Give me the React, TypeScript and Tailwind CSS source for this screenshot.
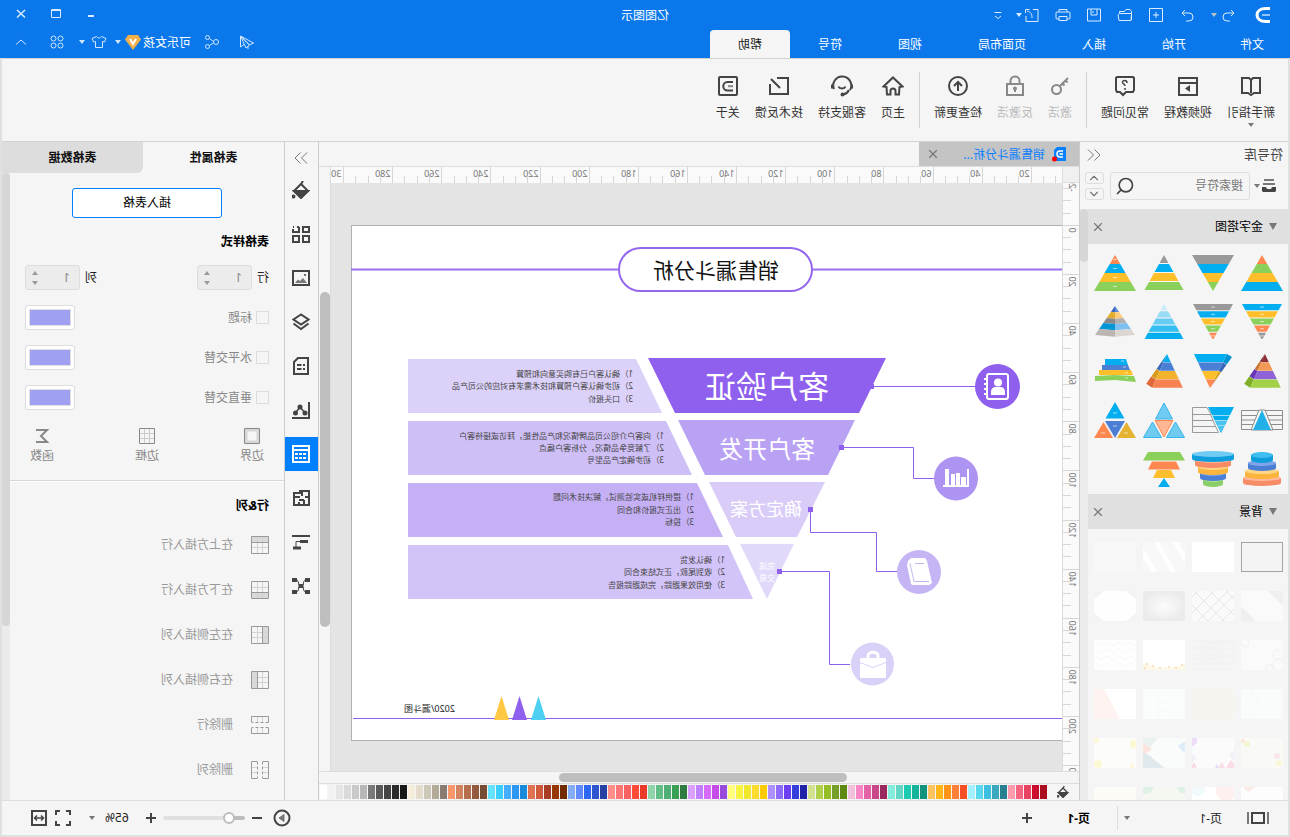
import type { ReactNode } from "react";
import { ChevronDown, ChevronUp, Search, X } from "lucide-react";

const BLUE = "#02aeef";
const NAVY = "#4b7fd6";
const YELLOW = "#ffbf2b";
const GREEN = "#8bd05a";
const ORANGE = "#ff8850";
const GRAY = "#999999";

type IconProps = {
  size?: number;
  box?: number;
  width?: number;
  children: ReactNode;
};

function Icon({ size = 16, box = 16, width = 1, children }: IconProps) {
  return (
    <svg
      width={size}
      height={size}
      viewBox={`0 0 ${box} ${box}`}
      fill="none"
      stroke="currentColor"
      strokeWidth={width}
      className="block shrink-0"
      aria-hidden="true"
    >
      {children}
    </svg>
  );
}

function Caret({ className = "" }: { className?: string }) {
  return (
    <svg width="6" height="4" viewBox="0 0 6 4" className={`block shrink-0 ${className}`} aria-hidden="true">
      <path d="M0 0h6L3 4z" fill="currentColor" />
    </svg>
  );
}

/* ---------- Header ---------- */

const quickActions = [
  { label: "重做", icon: <path d="M13 6H6a4 4 0 0 0 0 8h3M10 3l3 3-3 3" /> },
  { label: "新建", icon: <path d="M1.500 1.500h13v13h-13zM8 5v6M5 8h6" /> },
  { label: "打开", icon: <path d="M1.500 13V4.500L3 2.500h4l1.500 2h5V6M1.500 6.500h12L15 8l-1 5.500H2z" /> },
  { label: "保存", icon: <path d="M1.500 2h13v12h-13zM5 2v6h6V2M9 4v2" /> },
  { label: "打印", icon: <path d="M4 5V2.500h8V5M4 12H1.500l-.5-1V6l.5-1h13l.5 1v5l-.5 1H12M4 9.500h8v4H4z" /> },
  { label: "导出", icon: <path d="M7 2.500H2v12h12V9M14.500 2.500h-4M14.500 2.500V6M8 11c0-4 1-6 5-7" /> },
];

function TitleBar() {
  return (
    <div className="grid h-[30px] grid-cols-[1fr_auto_1fr] items-center">
      <div className="flex items-center pl-[19px]">
        <svg width="16" height="18" viewBox="0 0 16 18" fill="none" aria-hidden="true">
          <path d="M1 2.500h4c6 0 9 3 9 6.500s-3 6.500-9 6.500H1" stroke="#fff" strokeWidth="3" />
          <path d="M1 9h8" stroke="#8ec4fa" strokeWidth="2" />
        </svg>
        <button aria-label="撤销" className="ml-[18px]">
          <Icon>
            <path d="M3 6h7a4 4 0 0 1 0 8H7M6 3L3 6l3 3" />
          </Icon>
        </button>
        <Caret className="ml-1 mr-4 text-[#b9c6c9]" />
        <div className="flex gap-[15px]">
          {quickActions.map((a) => (
            <button key={a.label} aria-label={a.label}>
              <Icon>{a.icon}</Icon>
            </button>
          ))}
        </div>
        <Caret className="ml-0.5" />
        <button aria-label="更多" className="ml-2.5">
          <Icon>
            <path d="M4.500 5.500h7M5 9l3 2.500L11 9" />
          </Icon>
        </button>
      </div>
      <div className="pt-px text-xs text-white">亿图图示</div>
      <div className="flex justify-end pr-1">
        <button aria-label="最小化" className="flex w-[35px] justify-center">
          <Icon width={2}>
            <path d="M5 9h6" />
          </Icon>
        </button>
        <button aria-label="最大化" className="flex w-[35px] justify-center">
          <Icon>
            <path d="M3.500 2.500h9v8h-9zM3.500 3.500h9" />
          </Icon>
        </button>
        <button aria-label="关闭" className="flex w-[35px] justify-center">
          <Icon width={1.5}>
            <path d="M4 3l8 7.500M12 3l-8 7.500" />
          </Icon>
        </button>
      </div>
    </div>
  );
}

const menuTabs = ["开始", "插入", "页面布局", "视图", "符号"];

function MenuBar() {
  return (
    <div className="flex h-7 items-end justify-between">
      <nav className="flex h-7 text-xs text-white">
        <button className="w-[76px] pt-0.5">文件</button>
        {menuTabs.map((t) => (
          <button key={t} className="px-7 pt-0.5">
            {t}
          </button>
        ))}
        <button className="rounded-t-sm bg-[#f5f5f5] px-7 pt-0.5 text-[#222]">帮助</button>
      </nav>
      <div className="flex h-7 items-center pb-1 pr-[13px] text-[#cfe6ff]">
        <button aria-label="发送">
          <Icon>
            <path d="M14.500 2L1.500 9l4 2zM14.500 2L9 14l-3.500-3zM14.500 2v11l-3.500-2.500M7 12v3" />
          </Icon>
        </button>
        <button aria-label="分享" className="ml-[19px]">
          <Icon>
            <circle cx="4" cy="8" r="2.500" />
            <circle cx="12.500" cy="3.500" r="2" />
            <circle cx="12.500" cy="12.500" r="2" />
            <path d="M6.500 7.500l4-3M6.500 9l4 2.500" />
          </Icon>
        </button>
        <button className="ml-[13px] flex items-center gap-0.5 text-xs text-white">
          <span className="pt-px">可乐女孩</span>
          <svg width="16" height="15" viewBox="0 0 16 15" aria-hidden="true">
            <path d="M3 0h10l3 4.500L8 15 0 4.500z" fill="#f0b04a" />
            <path d="M5 4l3 5 3-5" fill="none" stroke="#fff" strokeWidth="2" />
          </svg>
        </button>
        <Caret className="ml-1" />
        <button aria-label="主题" className="ml-2">
          <Icon>
            <path d="M5.500 2.500c1 2 4 2 5 0l4.500 2-1.500 3.500-2-.5v6h-7v-6l-2 .5L1 4.500z" />
          </Icon>
        </button>
        <Caret className="ml-1.5" />
        <button aria-label="应用" className="ml-[14px]">
          <Icon>
            <circle cx="4.500" cy="4.500" r="2.500" />
            <circle cx="11.500" cy="4.500" r="2.500" />
            <circle cx="4.500" cy="11.500" r="2.500" />
            <circle cx="11.500" cy="11.500" r="2.500" />
          </Icon>
        </button>
        <button aria-label="收起" className="ml-5">
          <Icon>
            <path d="M3 10.500l5-4.500 5 4.500" />
          </Icon>
        </button>
      </div>
    </div>
  );
}

/* ---------- Ribbon ---------- */

function RibbonItem({
  label,
  disabled = false,
  menu = false,
  children,
}: {
  label: string;
  disabled?: boolean;
  menu?: boolean;
  children: ReactNode;
}) {
  return (
    <button disabled={disabled} className={`flex flex-col items-center ${disabled ? "text-[#888]" : "text-[#444]"}`}>
      <Icon size={22} box={22} width={2}>
        {children}
      </Icon>
      <span className={`mt-2 text-xs leading-4 ${disabled ? "text-[#bbb]" : "text-[#333]"}`}>{label}</span>
      {menu && <Caret className="mt-0.5 text-[#777]" />}
    </button>
  );
}

function RibbonDivider() {
  return <div className="-mx-px -mt-[3px] h-14 w-px shrink-0 bg-[#d0d0d0]" />;
}

function Ribbon() {
  return (
    <div className="flex h-[84px] shrink-0 items-start gap-[15px] overflow-hidden border-y border-[#d2d2d2] bg-[#f5f5f5] pl-[13px] pt-4">
      <RibbonItem label="新手指引" menu>
        <path d="M2 3h7l2 2 2-2h7v15h-6l-3 2-3-2H2zM11 5v13" />
      </RibbonItem>
      <RibbonItem label="视频教程">
        <path d="M2 3h18v17H2zM2 8h18" />
        <path d="M9 10l5 3.500L9 17z" fill="currentColor" stroke="none" />
      </RibbonItem>
      <RibbonItem label="常见问题">
        <path d="M3 2h16l1 1v12l-1 2h-3l-3 3-3-3H3l-1-2V3z" />
        <path d="M9 8c0-3.500 5-3 4.500-.5C13.300 9 11 9 11 11M11 13v2" strokeWidth="1.500" />
      </RibbonItem>
      <RibbonDivider />
      <RibbonItem label="激活" disabled>
        <circle cx="14.500" cy="14.500" r="4.500" />
        <path d="M11 11L3 3M6 5L3.500 7.500M9 8l-2.500 2.500" />
      </RibbonItem>
      <RibbonItem label="反激活" disabled>
        <path d="M3 9h16v11H3zM6.500 9V6a4.500 4.500 0 0 1 9 0v3M11 14v3" />
        <circle cx="11" cy="13.500" r="1" />
      </RibbonItem>
      <RibbonItem label="检查更新">
        <circle cx="11" cy="11" r="9" />
        <path d="M11 16V7M7 11l4-4 4 4" />
      </RibbonItem>
      <RibbonDivider />
      <RibbonItem label="主页">
        <path d="M11 2.500L1.500 11.500 4.500 12l.5 7.500h3.500V16a2.500 2.500 0 0 1 5 0v3.500H17l.5-7.500 3-.5z" />
      </RibbonItem>
      <RibbonItem label="客服支持">
        <path d="M3 15a9 9 0 1 1 16-1M4 15c1 2 3 4 6 4.500" />
        <path d="M7.500 11.500c1 2.500 6 2.500 7 0" />
        <path d="M1 9.500v4M21 9.500v4" />
        <circle cx="10.500" cy="19.500" r="1" />
      </RibbonItem>
      <RibbonItem label="技术反馈">
        <path d="M20 9v10H2V3h11M19 4l-9 9" />
      </RibbonItem>
      <RibbonItem label="关于">
        <rect x="2" y="2" width="18" height="18" rx="1" />
        <path d="M6 7h5.500a4 4 0 0 1 0 8.500H6" />
        <path d="M6 11.200h5" stroke="#888" />
      </RibbonItem>
    </div>
  );
}

/* ---------- Symbol library ---------- */

function Pyramid({
  colors,
  inverted = false,
  gap = 0,
  marks = false,
  half = 21,
}: {
  colors: string[];
  inverted?: boolean;
  gap?: number;
  marks?: boolean;
  half?: number;
}) {
  const step = 36 / colors.length;
  const edge = (y: number) => (inverted ? half * (1 - y / 36) : (half * y) / 36);
  return (
    <>
      {colors.map((c, i) => {
        const a = i * step;
        const b = (i + 1) * step - gap;
        return (
          <g key={i}>
            <polygon
              points={`${21 - edge(a)},${a} ${21 + edge(a)},${a} ${21 + edge(b)},${b} ${21 - edge(b)},${b}`}
              fill={c}
            />
            {marks && <path d={`M19 ${(a + b) / 2}h4`} stroke="#fff" opacity="0.6" />}
          </g>
        );
      })}
    </>
  );
}

function FacetPyramid({ light, dark }: { light: string[]; dark: string[] }) {
  const top = [2, 8, 14, 19, 25];
  const bottom = [8, 14, 19, 25, 31];
  return (
    <>
      {top.map((a, i) => {
        const b = bottom[i];
        const wa = ((a - 2) * 20) / 29;
        const wb = ((b - 2) * 20) / 29;
        const da = wa / 12;
        const db = wb / 12;
        return (
          <g key={a}>
            <polygon points={`${21 - wa},${a} 21,${a + da} 21,${b + db} ${21 - wb},${b}`} fill={light[i]} />
            <polygon points={`${21 + wa},${a} 21,${a + da} 21,${b + db} ${21 + wb},${b}`} fill={dark[i]} />
          </g>
        );
      })}
    </>
  );
}

function SolidPyramid({ front, side, inverted = false }: { front: string[]; side: string[]; inverted?: boolean }) {
  const n = front.length;
  const pt = (t: number) => {
    const k = inverted ? 1 - t : t;
    return inverted
      ? { y: 1 + 34 * t, l: 24 - 17 * k, r: 24 + 16 * k, s: 24 - 22 * k, sy: 1 + 34 * t + 3 * k }
      : { y: 1 + 34 * t, l: 18 - 16 * t, r: 18 + 15 * t, s: 18 + 21 * t, sy: 1 + 30 * t };
  };
  return (
    <>
      {front.map((c, i) => {
        const a = pt(i / n);
        const b = pt((i + 1) / n - 0.01);
        const near = inverted ? "l" : "r";
        return (
          <g key={i}>
            <polygon
              points={`${a[near]},${a.y} ${a.s},${a.sy} ${b.s},${b.sy} ${b[near]},${b.y}`}
              fill={side[i]}
            />
            <polygon points={`${a.l},${a.y} ${a.r},${a.y} ${b.r},${b.y} ${b.l},${b.y}`} fill={c} />
          </g>
        );
      })}
    </>
  );
}

function Discs({ layers }: { layers: { y: number; r: number; fill: string; top: string }[] }) {
  return (
    <>
      {layers.map((d) => (
        <g key={d.y}>
          <path d={`M${21 - d.r} ${d.y}v5a${d.r} 3 0 0 0 ${d.r * 2} 0v-5z`} fill={d.fill} />
          <ellipse cx="21" cy={d.y} rx={d.r} ry="3" fill={d.top} />
        </g>
      ))}
    </>
  );
}

const symbols: ReactNode[] = [
  <Pyramid colors={[ORANGE, GREEN, YELLOW, BLUE]} />,
  <Pyramid colors={[GRAY, BLUE, YELLOW, GREEN]} inverted />,
  <Pyramid colors={[GRAY, BLUE, YELLOW, GREEN]} gap={1} half={20} />,
  <Pyramid colors={[ORANGE, BLUE, YELLOW, GREEN]} marks />,
  <Pyramid colors={[BLUE, YELLOW, GREEN, ORANGE, GRAY]} inverted gap={1} marks half={20} />,
  <Pyramid colors={[GRAY, BLUE, YELLOW, GREEN, ORANGE]} inverted gap={1} marks half={20} />,
  <Pyramid colors={["#c9ecf9", "#9adcf5", "#66ccf3", "#33bdf1", BLUE]} gap={1} half={20} />,
  <FacetPyramid
    light={["#5d8ae0", "#ffcb7d", "#b0b0b0", "#7cc0f2", "#dbd6d2"]}
    dark={["#3f68b8", "#e3ac2b", "#8a8a8a", "#0296d6", "#bcb6b2"]}
  />,
  <SolidPyramid front={["#8f2f38", "#f29a55", "#9062da", "#a2d148"]} side={["#6d2028", "#cc7633", "#6636b4", "#7fae28"]} />,
  <SolidPyramid front={[BLUE, NAVY, YELLOW, ORANGE]} side={["#0294d2", "#3767b8", "#dca21e", "#e46f3c"]} inverted />,
  <SolidPyramid front={[BLUE, NAVY, "#f2b22c", "#f78150"]} side={["#0294d2", "#3767b8", "#d99c1c", "#e0693a"]} />,
  <g>
    <path d="M10 6h21v6H8z" fill={BLUE} />
    <path d="M8 12h26v5H6z" fill={NAVY} />
    <path d="M5 17h32v5H3z" fill={YELLOW} />
    <path d="M2 23l20-1 19 1v5l-20-1-21 2z" fill={GREEN} />
    <path d="M12 8h3M10 14h3M8 20h3M8 25h3" stroke="#fff" opacity="0.6" />
  </g>,
  <g fill="none" stroke="#8d8d8d">
    <path d="M.5 8.500h41v19H.5zM.5 13.500h41M.5 18h41M.5 22.500h41" />
    <path d="M18 8h6l8 20H10z" fill="#f5f5f5" />
    <path d="M21 8l9 20H12z" fill="#21b0e8" stroke="none" />
  </g>,
  <g>
    <path d="M0 5h26L13 31z" fill={BLUE} />
    <path d="M7 18h12l-6 13z" fill="#4cc4f2" />
    <path d="M4 13.500h18M7 18.500h12M9 23.500h7" stroke="#9adcf5" />
    <path
      d="M27 5.500h14.500v7H23zM23.500 12.500h18v6H21zM21 18.500h20.500v6H18.500zM18.500 24.500h23v6H15.500z"
      fill="none"
      stroke="#999"
    />
  </g>,
  <g fill="#6fcbf1" stroke="#35b5ea">
    <path d="M21 1l8.500 16h-17zM9.500 20l9 15.500H.5zM32.500 20l9 15.500h-18z" />
    <path d="M12 18.500h18L21 35z" fill="#fdb795" stroke={ORANGE} />
  </g>,
  <g>
    <path d="M21 0l9.500 16.500h-19z" fill={BLUE} />
    <path d="M11 19h20l-10 17z" fill={NAVY} />
    <path d="M9.500 20l9.500 16H0z" fill="#e5b232" />
    <path d="M32.500 20l9.500 16H23z" fill={ORANGE} />
    <path d="M19 11h4M19 24h4M8 31h4M31 31h4" stroke="#fff" opacity="0.6" />
  </g>,
  <Discs
    layers={[
      { y: 27, r: 19, fill: "#f78b66", top: "#ffb79c" },
      { y: 20, r: 17, fill: "#fbb43c", top: "#ffd685" },
      { y: 12, r: 14, fill: NAVY, top: "#7fa5e8" },
      { y: 4, r: 11, fill: "#0f9edb", top: "#3dbdf0" },
    ]}
  />,
  <Discs
    layers={[
      { y: 28, r: 10, fill: "#8bcf68", top: "#b0e294" },
      { y: 22, r: 13, fill: NAVY, top: "#7fa5e8" },
      { y: 16, r: 15, fill: "#fbb43c", top: "#ffd685" },
      { y: 9, r: 18, fill: "#f78b66", top: "#ffb79c" },
      { y: 3, r: 21, fill: "#0f9edb", top: "#6fcbf1" },
    ]}
  />,
  <g>
    <path d="M5 1h32l5 8.500H0z" fill={GREEN} />
    <path d="M9 10.500h24l4 8H5z" fill={ORANGE} />
    <path d="M14 19h14l4 8H10z" fill={YELLOW} />
    <path d="M21 27l6 9H15z" fill={BLUE} />
  </g>,
];

const backdrops: ReactNode[] = [
  <rect x="0.5" y="0.5" width="41" height="29" fill="#f4f4f4" stroke="#a3a3a3" />,
  <rect width="42" height="30" fill="#fff" />,
  <g>
    <rect width="42" height="30" fill="#f8f8f8" />
    <path d="M0 12L7 0h5L0 22zM9 30L26 0h5L14 30zM28 30L42 6v9l-9 15z" fill="#fff" />
  </g>,
  <rect width="42" height="30" fill="#f8f8f8" />,
  <g>
    <rect width="42" height="30" fill="#fafafa" />
    <path d="M0 0h15L0 15zM42 30H27l15-15z" fill="#efefef" />
  </g>,
  <g>
    <rect width="42" height="30" fill="#fafafa" />
    <path
      d="M0 8l8-8M0 24L24 0M10 30L40 0M26 30l16-16M0 4l26 26M6 0l30 30M20 0l22 22M36 0l6 6M0 18l12 12"
      stroke="#e6e6e6"
    />
  </g>,
  <rect width="42" height="30" fill="url(#soft-centre)" />,
  <g>
    <rect width="42" height="30" fill="#fefefe" />
    <path d="M0 0h10L0 8zM42 0H32l10 8zM0 30h10L0 22zM42 30H32l10-8z" fill="#f3f3f3" />
  </g>,
  <g fill="none" stroke="#f0f0f0">
    <rect width="42" height="30" fill="#fafafa" stroke="none" />
    <circle cx="5" cy="15" r="5" />
    <circle cx="5" cy="25" r="6" />
    <circle cx="13" cy="28" r="4" />
    <circle cx="38" cy="3" r="4" />
  </g>,
  <g fill="none" stroke="#f8f8f8">
    <rect width="42" height="30" fill="#f3f3f3" stroke="none" />
    <path d="M0 5c14 6 28-4 42 0M0 11c14 6 28-4 42 2M0 21c14-4 28 4 42 0M0 27c14-4 28 4 42-2" />
  </g>,
  <g>
    <rect width="42" height="30" fill="#fff" />
    <path d="M0 22l4 3 6 2 8 0 8 1 8-3 8-2v7H0z" fill="#fdf8e8" />
    <path d="M2 25h2M8 28h2M15 27h2M24 28h2M31 26h2M37 24h2M39 28h2" stroke="#f8e2c4" strokeWidth="2" />
  </g>,
  <g fill="none" stroke="#f7f7f7">
    <rect width="42" height="30" fill="#fefefe" stroke="none" />
    <path d="M0 6l5-4 6 4 6-4 6 4 6-4 6 4 6-4M0 13l5-4 6 4 6-4 6 4 6-4 6 4 6-4M0 20l5-4 6 4 6-4 6 4 6-4 6 4 6-4M0 27l5-4 6 4 6-4 6 4 6-4 6 4 6-4" />
  </g>,
  <g>
    <rect width="42" height="30" fill="#fafcfb" />
    <path d="M0 0l15 30M10 0l15 30M20 0l15 30M30 0l12 24M42 0L27 30M32 0L17 30M22 0L7 30M12 0L0 24" stroke="#f5faf8" />
  </g>,
  <g>
    <rect width="42" height="30" fill="#f6f4ef" />
    <path d="M4 0v30M10 0v30M16 0v30M22 0v30M28 0v30M34 0v30M39 0v30" stroke="#f4f2ea" />
  </g>,
  <g>
    <rect width="42" height="30" fill="#fbfdfc" />
    <path d="M0 6h42M0 14h42M0 22h42M6 0v30M16 0v30M26 0v30M36 0v30" stroke="#f6faf9" />
  </g>,
  <g>
    <rect width="42" height="30" fill="#fff" />
    <path d="M32 0h10v30H16z" fill="#fff3f1" />
  </g>,
  <g>
    <rect width="42" height="30" fill="#f9f9f6" />
    <circle cx="6" cy="18" r="3" fill="#fbe6ea" />
    <circle cx="4" cy="25" r="3" fill="#fbf6d8" />
    <circle cx="36" cy="6" r="3" fill="#f6f4d4" />
    <circle cx="40" cy="3" r="2" fill="#fbe6d8" />
  </g>,
  <g>
    <rect width="42" height="30" fill="#fbfbfc" />
    <path d="M42 0v9l-5-4V0z" fill="#efdcf8" />
    <path d="M0 12l5 5-5 6zM42 16l-5 4 5 4z" fill="#f2eff6" />
    <path d="M3 22l5 8H0v-4zM12 24l4 6H9zM40 24l2 3v3h-5z" fill="#fadbe8" />
    <path d="M17 26l2 4h-4z" fill="#e2dcfa" />
  </g>,
  <g>
    <rect width="42" height="30" fill="#fafbfb" />
    <path d="M0 3l7 5-5 6-2-1z" fill="#dcecf8" />
    <path d="M42 4v14l-9-7z" fill="#fae4e0" />
    <path d="M27 0h15v5l-7 4z" fill="#e9f2ef" />
    <path d="M42 15v15H20l8-6 8-7z" fill="#e0e9ee" />
  </g>,
  <g fill="#fcf8d6">
    <rect width="42" height="30" fill="#fcfcfb" />
    <circle cx="2" cy="6" r="4" />
    <circle cx="38" cy="26" r="4" />
    <circle cx="40" cy="2" r="3" />
    <circle cx="4" cy="28" r="2" />
  </g>,
  <g>
    <rect width="42" height="30" fill="#fdfdfd" />
    <path d="M28 0h12l-5 5z" fill="#fae9e4" />
  </g>,
  <g>
    <rect width="42" height="30" fill="#fff" />
    <circle cx="8" cy="4" r="10" fill="#fdf0ee" />
    <circle cx="36" cy="2" r="7" fill="#f0fafa" />
  </g>,
  <g>
    <rect width="42" height="30" fill="#f5f8f1" />
    <path d="M0 0h8a8 8 0 0 1-8 7zM42 0H31a10 10 0 0 0 11 7z" fill="#dff0e6" />
  </g>,
  <rect width="42" height="30" fill="#fdfbf5" />,
];

function SectionHeader({ title }: { title: string }) {
  return (
    <div className="flex h-[35px] items-center bg-[#e0e0e0] pl-[11px] pr-[3px]">
      <svg width="8" height="7" viewBox="0 0 8 7" aria-hidden="true">
        <path d="M0 0h8L4 7z" fill="#777" />
      </svg>
      <h3 className="ml-1.5 flex-1 text-xs text-black">{title}</h3>
      <button aria-label={`关闭${title}`} className="text-[#777]">
        <X size={14} strokeWidth={2} />
      </button>
    </div>
  );
}

function SymbolLibrary() {
  return (
    <aside className="flex w-[209px] shrink-0 flex-col border-r border-[#ccc] bg-[#f5f5f5]">
      <div className="flex h-[30px] shrink-0 items-center justify-between pb-1 pl-[5px] pr-[7px]">
        <h2 className="text-[13px] text-[#444]">符号库</h2>
        <button aria-label="折叠符号库" className="text-[#777]">
          <Icon size={14} box={14}>
            <path d="M6.500 1.500L1 7l5.500 5.500M13 1.500L7.500 7l5.500 5.500" />
          </Icon>
        </button>
      </div>
      <div className="flex h-7 shrink-0 items-center pl-[11px]">
        <button aria-label="打开库" className="flex items-center gap-px text-[#444]">
          <Icon width={2}>
            <path d="M3 2h10M2 6h12" stroke="#777" />
            <path d="M1 9h4l1 2h4l1-2h4v4l-1 1H2l-1-1z" fill="currentColor" stroke="none" />
          </Icon>
          <Caret className="text-[#777]" />
        </button>
        <label className="ml-1 flex h-7 w-[140px] items-center rounded-[3px] border border-[#ddd] pl-1.5 pr-1">
          <input
            type="text"
            aria-label="搜索符号"
            placeholder="搜索符号"
            className="w-full min-w-0 bg-transparent text-xs outline-none placeholder:text-[#777]"
          />
          <Search size={20} strokeWidth={2} className="shrink-0 text-[#444]" />
        </label>
        <div className="ml-1.5 flex h-7 flex-col justify-between text-[#777]">
          <button aria-label="上一个" className="flex h-3 w-[19px] items-center justify-center rounded-[3px] border border-[#ddd]">
            <ChevronUp size={14} strokeWidth={2} />
          </button>
          <button aria-label="下一个" className="flex h-3 w-[19px] items-center justify-center rounded-[3px] border border-[#ddd]">
            <ChevronDown size={14} strokeWidth={2} />
          </button>
        </div>
      </div>
      <div className="mt-[9px] flex min-h-0 flex-1">
        <div className="min-w-0 flex-1 overflow-hidden">
          <SectionHeader title="金字塔图" />
          <div className="grid grid-cols-[repeat(4,42px)] gap-x-[7px] gap-y-[13px] pb-[7px] pl-[5px] pt-[11px]">
            {symbols.map((s, i) => (
              <svg key={i} width="42" height="36" viewBox="0 0 42 36" aria-hidden="true">
                {s}
              </svg>
            ))}
          </div>
          <SectionHeader title="背景" />
          <div className="grid grid-cols-[repeat(4,42px)] gap-x-[7px] gap-y-[19px] pl-[5px] pt-[13px]">
            {backdrops.map((b, i) => (
              <svg key={i} width="42" height="30" viewBox="0 0 42 30" aria-hidden="true">
                <defs>
                  <radialGradient id="soft-centre">
                    <stop offset="0" stopColor="#fcfcfc" />
                    <stop offset="1" stopColor="#ebebeb" />
                  </radialGradient>
                </defs>
                {b}
              </svg>
            ))}
          </div>
        </div>
        <div className="w-2 shrink-0 bg-[#ebebeb]">
          <div className="h-[53px] rounded-full bg-[#d6d6d6]" />
        </div>
      </div>
    </aside>
  );
}

/* ---------- Canvas ---------- */

const TICK = 12.28;

function HorizontalRuler() {
  return (
    <svg className="block h-[17px] min-w-0 flex-1 bg-[#fafafa]" aria-hidden="true">
      {Array.from({ length: 59 }, (_, i) => {
        const k = i + 2;
        const x = Math.round(-18.9 + k * TICK) + 0.5;
        const major = k % 4 === 0;
        return (
          <g key={k}>
            <path d={major ? `M${x} 0v17` : `M${x} 9v8`} stroke="#d6d6d6" />
            {major && (
              <text x={x + 2} y="10" fontSize="9" fill="#777">
                {k * 5}
              </text>
            )}
          </g>
        );
      })}
    </svg>
  );
}

function VerticalRuler() {
  return (
    <svg className="block w-[17px] shrink-0 border-r border-[#ddd] bg-[#fafafa]" aria-hidden="true">
      {Array.from({ length: 53 }, (_, i) => {
        const k = i - 4;
        const y = Math.round(41.8 + k * TICK) + 0.5;
        const major = k % 4 === 0;
        return (
          <g key={k}>
            <path d={major ? `M0 ${y}h17` : `M8 ${y}h9`} stroke="#d6d6d6" />
            {major && (
              <text transform={`translate(10 ${y + 2}) rotate(-90)`} textAnchor="end" fontSize="9" fill="#777">
                {k * 5}
              </text>
            )}
          </g>
        );
      })}
    </svg>
  );
}

const steps = [
  {
    funnel: "176,175 414,175 387,230 203,230",
    funnelFill: "#8f5fee",
    panel: "426,176 654,176 654,230 400,230",
    panelFill: "#dbd1f9",
    numberX: 429,
    textX: 442,
    lines: [
      { y: 194, text: "确认客户已有购买意向和预算" },
      { y: 206, text: "初步确认客户预算和技术需求有对应的公司产品" },
      { y: 219, text: "口头报价" },
    ],
  },
  {
    funnel: "207,237 384,237 357,292 234,292",
    funnelFill: "#b9a2f4",
    panel: "396,238 654,238 654,292 370,292",
    panelFill: "#cfbff7",
    numberX: 398,
    textX: 411,
    lines: [
      { y: 256, text: "向客户介绍公司品牌情况和产品性能，拜访或接待客户" },
      { y: 268, text: "了解竞争品情况，分析客户痛点" },
      { y: 280, text: "初步确定产品型号" },
    ],
  },
  {
    funnel: "237,299 353,299 326,354 265,354",
    funnelFill: "#d9ccf8",
    panel: "365,300 654,300 654,354 339,354",
    panelFill: "#c5b0f6",
    numberX: 368,
    textX: 381,
    lines: [
      { y: 317, text: "提供样机或实验测试，解决技术问题" },
      { y: 330, text: "出正式报价和合同" },
      { y: 342, text: "投标" },
    ],
  },
  {
    funnel: "268,361 322,361 295,416",
    funnelFill: "#e2d9fa",
    panel: "334,362 654,362 654,416 309,416",
    panelFill: "#d2c3f8",
    numberX: 337,
    textX: 350,
    lines: [
      { y: 380, text: "确认发货" },
      { y: 392, text: "收到尾款，正式结束合同" },
      { y: 405, text: "使用效果跟踪，完成跟踪报告" },
    ],
  },
];

function FunnelDrawing() {
  return (
    <svg width="731" height="588" viewBox="0 0 731 588" className="block" role="img" aria-label="销售漏斗分析">
      <rect x="-20.5" y="42.5" width="731" height="515" fill="#fff" stroke="#b0b0b0" />
      <path d="M0 86.500h711" stroke="#9a70ef" strokeWidth="2" />
      <rect x="250" y="65" width="193" height="43" rx="21.500" fill="#fff" stroke="#9466ee" strokeWidth="2" />
      <text x="283" y="95" fontSize="21" fill="#111">
        销售漏斗分析
      </text>

      {steps.map((s) => (
        <g key={s.funnel}>
          <polygon points={s.funnel} fill={s.funnelFill} />
          <polygon points={s.panel} fill={s.panelFill} />
          {s.lines.map((l, i) => (
            <g key={l.text} fontSize="8" fill="#444">
              <text x={s.numberX} y={l.y}>{`${i + 1}）`}</text>
              <text x={s.textX} y={l.y}>
                {l.text}
              </text>
            </g>
          ))}
        </g>
      ))}

      <g fill="#fff">
        <text x="233" y="215" fontSize="31">
          客户验证
        </text>
        <text x="247" y="275" fontSize="24">
          客户开发
        </text>
        <text x="260" y="333" fontSize="18">
          确定方案
        </text>
        <text x="287" y="386" fontSize="8">
          完成
        </text>
        <text x="287" y="398" fontSize="8">
          交易
        </text>
      </g>

      {/* connectors */}
      <g fill="none" stroke="#8f5fee">
        <path d="M190 203.500H87" />
        <path d="M220.500 264.500h-72v31H128" />
        <path d="M251.500 326.500v23h-66v39H165" />
        <path d="M282.500 388.500h-50v93H212" />
      </g>
      <g fill="#8f5fee">
        <rect x="188" y="201" width="5" height="5" />
        <rect x="218" y="262" width="5" height="5" />
        <rect x="249" y="324" width="5" height="5" />
        <rect x="280" y="386" width="5" height="5" />
      </g>

      {/* address book */}
      <circle cx="64.5" cy="203.500" r="22.500" fill="#8f5fee" />
      <rect x="54" y="191" width="21" height="25" rx="2" fill="none" stroke="#fff" strokeWidth="2" />
      <circle cx="64" cy="199.500" r="4" fill="#fff" />
      <path d="M57 212v-3c0-4 3-5 4-5h6c1 0 4 1 4 5v3z" fill="#fff" />
      <path d="M75 196h3M75 201h3M75 206h3M75 211h3" stroke="#fff" strokeWidth="2" />

      {/* bar chart */}
      <circle cx="106" cy="295.500" r="22" fill="#ad93f2" />
      <path d="M93 286h2v16h1v-8h5v8h1v-12h4v12h1v-11h4v11h2v-16h4v16h2v2H93z" fill="#fff" />

      {/* notebook */}
      <circle cx="143" cy="389" r="22" fill="#c6b5f5" />
      <path d="M137 375h14l3 3 1 4-4 19-2 1h-16l-3-2 5-22z" fill="#fff" />
      <path d="M138 380.500h9M133 398.500h15l4-18" fill="none" stroke="#c6b5f5" />

      {/* briefcase */}
      <circle cx="189.500" cy="481" r="21.500" fill="#dad1f9" />
      <rect x="176" y="475" width="26" height="20" rx="1" fill="#fff" />
      <path d="M184 475v-2c0-5 10-5 10 0v2" fill="none" stroke="#fff" strokeWidth="3" />
      <path d="M176 479.500l13 5 13-5" fill="none" stroke="#dad1f9" />

      {/* footer */}
      <path d="M0 535.500h709" stroke="#8f5fee" />
      <path d="M523.500 513l7.500 24h-15z" fill="#4dd0f1" />
      <path d="M542.500 513l7.500 24h-15z" fill="#8f5fee" />
      <path d="M560.500 513l7.500 24h-15z" fill="#ffc844" />
      <text x="607" y="529" fontSize="9" fill="#222">
        2020/漏斗图
      </text>
    </svg>
  );
}

const palette = [
  "#ab0e1e", "#cc0a2e", "#e84360", "#f76480", "#fb9bae",
  "#287f91", "#3ba8c2", "#3cc0de", "#5ad8ef", "#a5f0ff",
  "#f64f26", "#ff7f38", "#ff9419", "#ffb616", "#ffc35f",
  "#12937c", "#15b39a", "#1ccab0", "#64d6c5", "#85ecdc",
  "#9a2a5e", "#c94888", "#e462a6", "#f985c7", "#f1c0dd",
  "#5d8812", "#779f28", "#97bd25", "#b0d14b", "#d3e291",
  "#1f24a9", "#3540dc", "#6c40f2", "#8e6bfb", "#ad91fb",
  "#fecb00", "#fbdc2c", "#efe82b", "#f9f442", "#ffff7e",
  "#994cdc", "#c34de7", "#d46bfa", "#c080ff", "#dca0ff",
  "#2e7c42", "#3aa056", "#4fad76", "#60bd86", "#8fd5ab",
  "#ea3a2c", "#ff4b39", "#f96262", "#ff7676", "#ff8f88",
  "#2641a4", "#2c56cf", "#2f66f2", "#608aff", "#86abf7",
  "#702c00", "#973700", "#a83c24", "#cf5b3c", "#e07252",
  "#188bdb", "#2b99f3", "#43aeff", "#3bceff", "#63e1ff",
  "#764b34", "#95593d", "#b4704d", "#d3835d", "#f7976b",
  "#897d73", "#b2ab9a", "#cdc9b8", "#e4ddce", "#f5ecdb",
  "#171717", "#2c2c2c", "#444444", "#5a5a5a", "#7a7a7a",
  "#b8b8b8", "#c9c9c9", "#d9d9d9", "#e6e6e6", "#f2f2f2",
  "#ffffff",
];

function BucketShape() {
  return (
    <>
      <path d="M7 0l2 3 7 7-7 6.500L2 10l7-7" />
      <path d="M2 10h14l-7 7z" fill="currentColor" />
      <circle cx="16.500" cy="15.500" r="1" fill="currentColor" />
    </>
  );
}

function CanvasArea() {
  return (
    <main className="flex min-w-0 flex-1 flex-col bg-[#f5f5f5]">
      <div className="flex h-6 shrink-0">
        <div className="flex w-40 items-center bg-[#c4c4c4] pl-[13px] pr-[7px]">
          <svg width="15" height="16" viewBox="0 0 15 16" aria-hidden="true">
            <path d="M0 1h9l3 3v11H0z" fill="#0a80ff" />
            <path d="M3 5h3a3 3 0 0 1 0 6H3M3 8h3.500" fill="none" stroke="#fff" strokeWidth="1.500" />
            <circle cx="11.500" cy="13" r="2.500" fill="#f00" />
          </svg>
          <button className="ml-1.5 flex-1 truncate pt-px text-left text-xs text-[#0a80ff]">销售漏斗分析...</button>
          <button aria-label="关闭文档" className="text-[#777]">
            <X size={14} strokeWidth={2} />
          </button>
        </div>
      </div>
      <div className="flex min-h-0 flex-1">
        <div className="flex min-w-0 flex-1 flex-col">
          <div className="flex h-[17px] shrink-0 border-y border-[#ddd]">
            <div className="w-[17px] shrink-0 border-r border-[#ddd] bg-[#f0f0f0]" />
            <HorizontalRuler />
          </div>
          <div className="flex min-h-0 flex-1">
            <VerticalRuler />
            <div className="min-w-0 flex-1 overflow-hidden bg-[#e4e4e4]">
              <FunnelDrawing />
            </div>
          </div>
        </div>
        <div className="w-3 shrink-0 border-l border-t border-[#ddd]">
          <div className="mt-[125px] h-[335px] w-2.5 rounded-full bg-[#bebebe]" />
        </div>
      </div>
      <div className="flex h-[13px] shrink-0 items-center border-y border-[#ddd] pl-[232px]">
        <div className="h-[9px] w-72 rounded-full bg-[#bebebe]" />
      </div>
      <div className="flex h-4 shrink-0 items-center overflow-hidden">
        <button aria-label="填充颜色" className="ml-2.5 mr-2.5 shrink-0 text-[#444]">
          <Icon size={12} box={18} width={2}>
            <BucketShape />
          </Icon>
        </button>
        <div className="flex gap-px">
          {palette.map((c) => (
            <button key={c} aria-label={c} className="h-[14px] w-[7px] shrink-0" style={{ backgroundColor: c }} />
          ))}
        </div>
      </div>
    </main>
  );
}

/* ---------- Side tools ---------- */

const tools = [
  { label: "填充", icon: <BucketShape /> },
  { label: "主题", icon: <path d="M1 2h6v5H1zM11 2h2M11 2v5h6V4M17 2h-1M1 11h6v6H1zM11 11h6v6h-6z" /> },
  {
    label: "图片",
    icon: (
      <>
        <path d="M1 2h16v14H1z" />
        <path d="M3 14l4-5 3 3 2-1.500L15 14z" fill="#777" stroke="none" />
        <circle cx="5" cy="6" r="1" fill="currentColor" stroke="none" />
      </>
    ),
  },
  { label: "图层", icon: <path d="M9 1.500l7.500 5L9 11.500l-7.500-5zM1.500 10.500l7.500 5.500 7.500-5.500" /> },
  { label: "注释", icon: <path d="M2 1h10l4 4v12H2zM5 8h2M8.500 8H13M5 12h2M8.500 12H13" /> },
  {
    label: "图表",
    icon: (
      <>
        <path d="M1 1v16h17" />
        <path d="M5 12l5-6 4.500 6" strokeWidth="1.500" />
        <circle cx="5" cy="12" r="1.500" fill="currentColor" />
        <circle cx="10" cy="6" r="1.500" fill="currentColor" />
        <circle cx="14.500" cy="12" r="1.500" fill="currentColor" />
      </>
    ),
  },
  {
    label: "表格",
    icon: <path d="M1 1h16v16H1zM1 5h16M4 9h3M8 9h3M12 9h3M4 13h3M8 13h3M12 13h3" />,
  },
  { label: "平面图", icon: <path d="M1 2h9v2h6v12H1zM1 8h4M8 2v5M10 8h6M6 16v-5M6 11h5M11 13v3" /> },
  {
    label: "甘特图",
    icon: (
      <>
        <path d="M0 2h18v2H0z" fill="currentColor" stroke="none" />
        <path d="M2 8.500h8M9 15h8" strokeWidth="3" />
        <path d="M10 8.500h4V14" strokeWidth="1" />
      </>
    ),
  },
  {
    label: "思维导图",
    icon: (
      <>
        <path d="M4 3c4 0 1 6 5 6s1-6 5-6M4 15c4 0 1-6 5-6s1 6 5 6" strokeWidth="1" />
        <path d="M0 3h5M13 3h5M0 15h5M13 15h5M6.500 9h5" strokeWidth="4" />
      </>
    ),
  },
];

function ToolStrip() {
  return (
    <div className="flex w-[34px] shrink-0 flex-col overflow-hidden border-l border-[#ccc] bg-[#f5f5f5]">
      <button aria-label="折叠面板" className="flex h-[31px] shrink-0 items-center justify-center text-[#777]">
        <Icon size={14} box={14}>
          <path d="M1 1.500L6.500 7 1 12.500M7.500 1.500L13 7l-5.500 5.500" />
        </Icon>
      </button>
      <div className="flex flex-col gap-2.5">
        {tools.map((t) => (
          <button
            key={t.label}
            aria-label={t.label}
            className={`flex h-[34px] shrink-0 items-center justify-center ${
              t.label === "表格" ? "bg-[#0080ff] text-white" : "text-[#444]"
            }`}
          >
            <Icon size={18} box={18} width={2}>
              {t.icon}
            </Icon>
          </button>
        ))}
      </div>
    </div>
  );
}

/* ---------- Table panel ---------- */

function Stepper({ id, label }: { id: string; label: string }) {
  return (
    <div className="flex items-center gap-[5px]">
      <label htmlFor={id} className="text-xs text-[#222]">
        {label}
      </label>
      <div className="flex h-[25px] w-[55px] items-center rounded-[3px] border border-[#ddd] bg-[#ececec] pl-[9px] pr-1.5">
        <input id={id} type="text" defaultValue="1" className="w-full min-w-0 bg-transparent text-xs text-[#888] outline-none" />
        <div className="flex flex-col gap-1.5 text-[#999]">
          <button aria-label={`${label}增加`}>
            <Caret className="rotate-180" />
          </button>
          <button aria-label={`${label}减少`}>
            <Caret />
          </button>
        </div>
      </div>
    </div>
  );
}

const styleOptions = ["标题", "水平交替", "垂直交替"];

const rowActions = [
  { label: "在上方插入行", fill: "M1 1h16v5H1z", line: "M1 6.500h16" },
  { label: "在下方插入行", fill: "M1 12h16v5H1z", line: "M1 11.500h16" },
  { label: "在左侧插入列", fill: "M1 1h5v16H1z", line: "M6.500 1v16" },
  { label: "在右侧插入列", fill: "M12 1h5v16h-5z", line: "M11.500 1v16" },
];

function TablePanel() {
  return (
    <aside className="flex w-[283px] shrink-0 flex-col border-l border-[#ccc] bg-[#f5f5f5]">
      <div className="flex h-[31px] shrink-0 text-xs font-bold text-[#111]">
        <button className="flex-1 pt-px">表格属性</button>
        <button className="flex-1 rounded-bl-md bg-[#ddd] pt-px">表格数据</button>
      </div>
      <div className="flex min-h-0 flex-1">
        <div className="min-w-0 flex-1 overflow-hidden">
          <div className="px-[15px] pt-[15px]">
            <button className="mx-auto block h-[30px] w-[150px] rounded-[3px] border border-[#0080ff] bg-white text-xs text-black">
              插入表格
            </button>
            <h3 className="mt-4 text-xs leading-4 font-bold text-black">表格样式</h3>
            <div className="mt-[15px] flex justify-between">
              <Stepper id="rows" label="行" />
              <Stepper id="cols" label="列" />
            </div>
            <div className="mt-[15px] flex flex-col gap-[15px]">
              {styleOptions.map((o) => (
                <div key={o} className="flex h-[25px] items-center justify-between">
                  <label className="flex items-center gap-1 text-xs text-[#888]">
                    <input type="checkbox" className="size-[13px] appearance-none border border-[#ddd] bg-[#f5f5f5]" />
                    {o}
                  </label>
                  <button aria-label={`${o}颜色`} className="h-[25px] w-[50px] rounded-[3px] border border-[#ddd] bg-white p-[3px]">
                    <span className="block size-full border border-[#e0e0e0] bg-[#9fa0f1]" />
                  </button>
                </div>
              ))}
            </div>
            <div className="mt-[18px] flex justify-between px-[5px] text-xs leading-4 text-[#888]">
              <button className="flex flex-col items-center gap-1">
                <Icon>
                  <path d="M.5.5h15v15H.5z" fill="#d6d6d6" />
                  <path d="M3.500 3.500h9v9h-9z" fill="#f5f5f5" stroke="#e6e6e6" />
                </Icon>
                边界
              </button>
              <button className="flex flex-col items-center gap-1">
                <Icon>
                  <path d="M5.500 1v14M10.500 1v14M1 5.500h14M1 10.500h14" stroke="#ccc" />
                  <path d="M.5.5h15v15H.5z" />
                </Icon>
                边框
              </button>
              <button className="flex flex-col items-center gap-1">
                <Icon width={2}>
                  <path d="M14 2H3l6 6-6 6h11" />
                </Icon>
                函数
              </button>
            </div>
          </div>
          <div className="mt-4 h-0.5 border-t border-[#d6d6d6] bg-white" />
          <div className="px-[15px]">
            <h3 className="mt-4 text-xs leading-4 font-bold text-black">行&amp;列</h3>
            <div className="mt-[22px] flex flex-col gap-[27px] text-xs leading-[18px] text-[#999]">
              {rowActions.map((a) => (
                <button key={a.label} className="flex items-center gap-[18px]">
                  <Icon size={18} box={18}>
                    <path d={a.fill} fill="#d9d9d9" stroke="none" />
                    <path d="M6.500 1v16M11.500 1v16M1 6.500h16M1 11.500h16" stroke="#d2d2d2" />
                    <path d={`M.5.5h17v17H.5z${a.line}`} />
                  </Icon>
                  {a.label}
                </button>
              ))}
              <button className="flex items-center gap-[18px]">
                <Icon size={18} box={18}>
                  <path d="M6.500 1v5M11.500 1v5M6.500 12v5M11.500 12v5" stroke="#d2d2d2" />
                  <path d="M.5 6V.5h17V6M.5 12v5.500h17V12" />
                  <path d="M.5 6.500h17M.5 11.500h17" strokeDasharray="3 2" />
                </Icon>
                删除行
              </button>
              <button className="flex items-center gap-[18px]">
                <Icon size={18} box={18}>
                  <path d="M1 6.500h5M1 11.500h5M12 6.500h5M12 11.500h5" stroke="#d2d2d2" />
                  <path d="M6 .5H.5v17H6M12 .5h5.500v17H12" />
                  <path d="M6.500.5v17M11.500.5v17" strokeDasharray="3 2" />
                </Icon>
                删除列
              </button>
            </div>
          </div>
        </div>
        <div className="w-2 shrink-0 bg-[#ebebeb]">
          <div className="h-[453px] rounded-full bg-[#d6d6d6]" />
        </div>
      </div>
    </aside>
  );
}

/* ---------- Status bar ---------- */

function StatusBar() {
  return (
    <footer className="flex h-[35px] shrink-0 items-center justify-between border-t border-[#ddd] bg-[#f5f5f5] text-xs text-[#444]">
      <div className="flex items-center pl-[19px]">
        <button aria-label="页面列表">
          <svg width="22" height="12" viewBox="0 0 22 12" fill="none" stroke="#444" strokeWidth="2" aria-hidden="true">
            <rect x="5" y="1" width="12" height="10" />
            <path d="M1 0v12M21 0v12" stroke="#777" />
          </svg>
        </button>
        <button className="ml-[25px] w-[92px] pt-px text-left text-[#222]">页-1</button>
        <Caret className="text-[#777]" />
        <div className="ml-1.5 h-6 w-px bg-[#ddd]" />
        <button className="ml-[27px] pt-px font-bold text-black">页-1</button>
        <button aria-label="添加页面" className="ml-8">
          <Icon width={2}>
            <path d="M8 3v10M3 8h10" />
          </Icon>
        </button>
      </div>
      <div className="flex items-center pr-[29px]">
        <button aria-label="播放">
          <Icon size={18} box={18} width={2}>
            <circle cx="9" cy="9" r="7.500" />
            <path d="M7 5.500l5 3.500-5 3.500z" fill="#777" stroke="#777" strokeWidth="1" />
          </Icon>
        </button>
        <button aria-label="缩小" className="ml-2">
          <Icon width={2}>
            <path d="M3 8h10" />
          </Icon>
        </button>
        <input
          type="range"
          aria-label="缩放"
          min="0"
          max="100"
          defaultValue="14"
          className="mx-1 h-1 w-[82px] appearance-none rounded-full bg-linear-to-r from-[#bdbdbd] from-15% to-[#e0e0e0] to-15% [&::-webkit-slider-thumb]:size-3 [&::-webkit-slider-thumb]:appearance-none [&::-webkit-slider-thumb]:rounded-full [&::-webkit-slider-thumb]:border-2 [&::-webkit-slider-thumb]:border-[#bdbdbd] [&::-webkit-slider-thumb]:bg-white"
        />
        <button aria-label="放大">
          <Icon width={2}>
            <path d="M8 3v10M3 8h10" />
          </Icon>
        </button>
        <button className="ml-[14px] flex items-center gap-2.5 text-[#222]">
          65%
          <Caret className="text-[#777]" />
        </button>
        <button aria-label="全屏" className="ml-[18px]">
          <Icon width={2}>
            <path d="M1 5V1h4M11 1h4v4M15 11v4h-4M5 15H1v-4" />
          </Icon>
        </button>
        <button aria-label="适合宽度" className="ml-2">
          <Icon width={2}>
            <path d="M1 1h14v14H1z" />
            <path d="M4 8h8M6 5.500L3.500 8 6 10.500M10 5.500l2.500 2.500-2.500 2.500" strokeWidth="1.500" />
          </Icon>
        </button>
      </div>
    </footer>
  );
}

function App() {
  return (
    <div className="flex h-screen w-full -scale-x-100 flex-col overflow-hidden bg-[#f5f5f5] font-['Noto_Sans','Noto_Sans_CJK_SC',sans-serif]">
      <header className="shrink-0 bg-[#0a78eb] text-[#d8ebff]">
        <TitleBar />
        <MenuBar />
      </header>
      <div className="flex min-h-0 flex-1 flex-col border-x-2 border-b-2 border-[#e0e0e0]">
        <Ribbon />
        <div className="flex min-h-0 flex-1">
          <SymbolLibrary />
          <CanvasArea />
          <ToolStrip />
          <TablePanel />
        </div>
        <StatusBar />
      </div>
    </div>
  );
}

export default App;
